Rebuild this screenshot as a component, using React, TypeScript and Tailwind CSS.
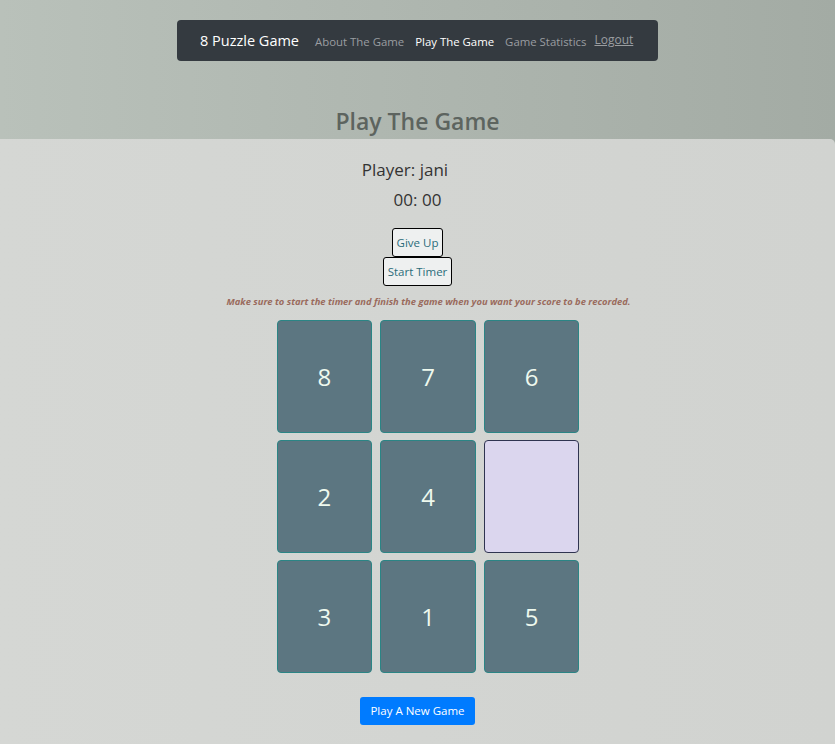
import React from "react";

const tiles: (number | null)[] = [8, 7, 6, 2, 4, null, 3, 1, 5];

function Tile({ value }: { value: number | null }) {
  if (value === null) {
    return <div className="h-[113px] rounded-[4px] border border-[#2f3450] bg-[#dbd6ee]" />;
  }
  return (
    <div className="flex h-[113px] items-center justify-center rounded-[4px] border border-[#2b8585] bg-[#5c7681] text-[24px] text-[#eef9ee]">
      {value}
    </div>
  );
}

export default function App() {
  return (
    <div
      className="min-h-[744px] bg-gradient-to-r from-[#b9c1ba] to-[#a3aba4]"
      style={{ fontFamily: '"Open Sans", "Noto Sans", sans-serif' }}
    >
      <div className="flex justify-center pt-5">
        <nav className="flex h-[41px] w-[481px] items-center rounded-[4px] bg-[#343a40] pl-[23px]">
          <span className="text-[14.5px] text-white">8 Puzzle Game</span>
          <div className="ml-[16px] mt-[2px] flex items-center gap-[11px] text-[11.4px]">
            <span className="text-[#9a9da0]">About The Game</span>
            <span className="text-white">Play The Game</span>
            <span className="text-[#9a9da0]">Game Statistics</span>
            <span className="-ml-[3px] -mt-[2px] text-[12px] text-[#9a9da0] underline">Logout</span>
          </div>
        </nav>
      </div>

      <h1 className="mt-[42px] h-[36px] text-center text-[23px] font-semibold leading-[36px] text-[#5d645f]">Play The Game</h1>

      <main className="min-h-[605px] rounded-tr-[5px] bg-gradient-to-r from-[#d5d7d4] to-[#d1d3d0] pt-[17px] pb-[18px]">
        <div className="flex flex-col items-center">
          <div className="-ml-[25px] text-[17px] leading-[27px] text-[#333]">Player: jani</div>
          <div className="mt-[3px] text-[17px] leading-[27px] text-[#333]">00: 00</div>

          <button className="mt-[15px] h-[29px] rounded-[3px] border border-black bg-[#eef0f0] px-[4px] text-[11.5px] text-[#2b6c7a]">
            Give Up
          </button>
          <button className="h-[29px] rounded-[3px] border border-black bg-[#eef0f0] px-[4px] text-[11.5px] text-[#2b6c7a]">
            Start Timer
          </button>

          <p className="ml-[22px] mt-[9px] text-[9.4px] font-bold italic leading-[14px] text-[#9a6b5d]">
            Make sure to start the timer and finish the game when you want your score to be recorded.
          </p>

          <div className="mt-[11px] ml-[21px] grid w-[303px] grid-cols-3 gap-x-[8px] gap-y-[7px]">
            {tiles.map((t, i) => (
              <Tile key={i} value={t} />
            ))}
          </div>

          <button className="mt-[24px] h-[28px] rounded-[3px] bg-[#007bff] px-[10px] text-[11.5px] text-white">
            Play A New Game
          </button>
        </div>
      </main>
    </div>
  );
}
